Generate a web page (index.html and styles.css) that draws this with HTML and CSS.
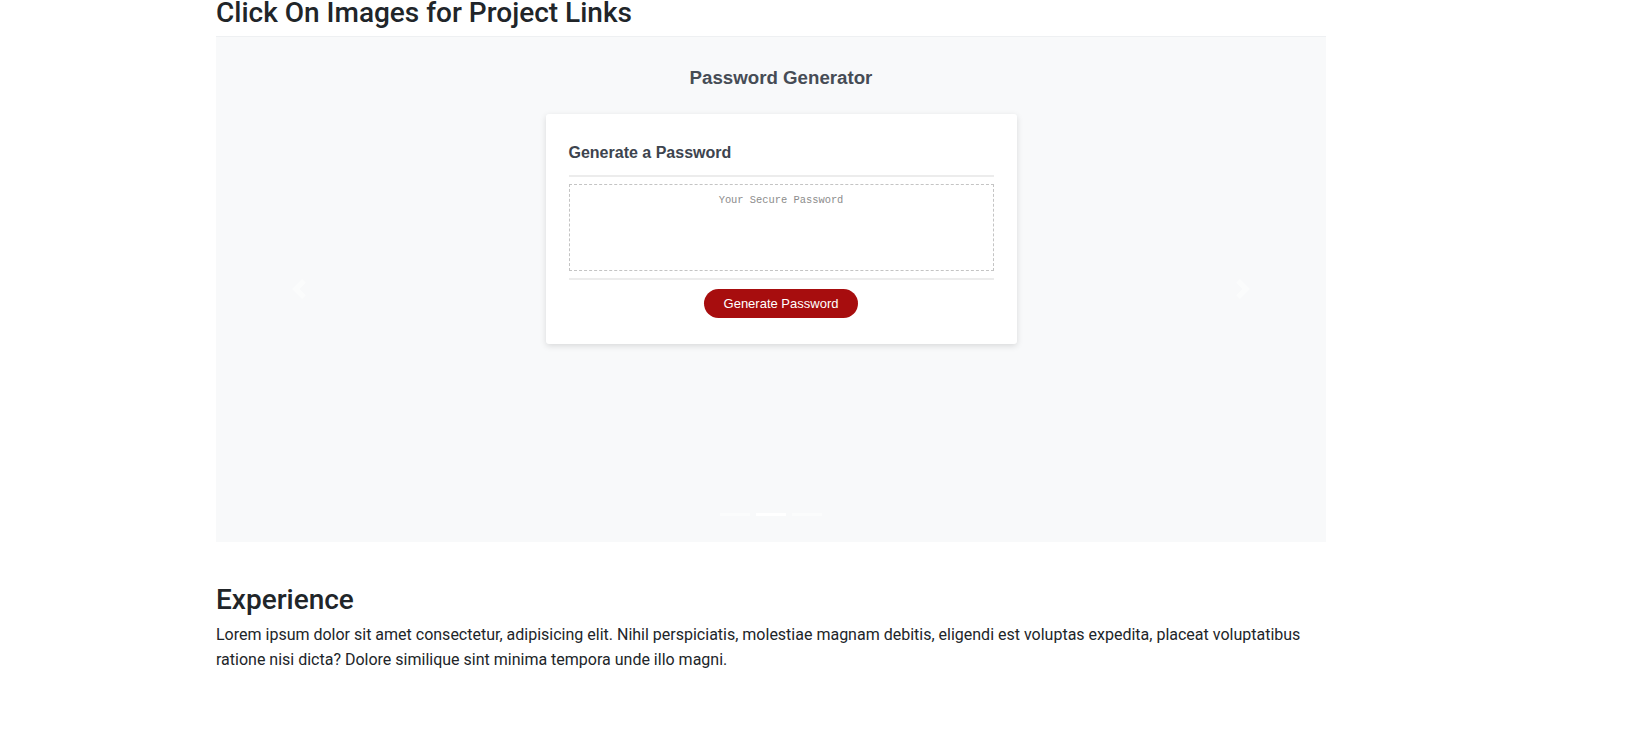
FILE: index.html
```html
<!DOCTYPE html>
<html lang="en">
<head>
<meta charset="utf-8">
<title>Projects</title>
<link rel="stylesheet" href="styles.css">
</head>
<body>
<main class="page">
  <h3 class="section-title top-title">Click On Images for Project Links</h3>
  <div class="carousel">
    <div class="slide">
      <div class="shot">
        <h1 class="shot-title">Password Generator</h1>
        <div class="pw-card">
          <div class="pw-header">
            <h2 class="pw-card-title">Generate a Password</h2>
          </div>
          <div class="pw-body">
            <div class="pw-box">Your Secure Password</div>
          </div>
          <div class="pw-footer">
            <button class="pw-btn" type="button">Generate Password</button>
          </div>
        </div>
      </div>
    </div>
    <a class="ctrl ctrl-prev" href="#" aria-label="Previous">
      <svg class="ctrl-icon" viewBox="0 0 8 8" width="20" height="20"><path d="M5.25 0l-4 4 4 4 1.5-1.5L4.25 4l2.5-2.5L5.25 0z"/></svg>
    </a>
    <a class="ctrl ctrl-next" href="#" aria-label="Next">
      <svg class="ctrl-icon" viewBox="0 0 8 8" width="20" height="20"><path d="M2.75 0l-1.5 1.5L3.75 4l-2.5 2.5L2.75 8l4-4-4-4z"/></svg>
    </a>
    <ol class="indicators">
      <li></li>
      <li class="active"></li>
      <li></li>
    </ol>
  </div>
  <h3 class="section-title exp-title">Experience</h3>
  <p class="lead-text">Lorem ipsum dolor sit amet consectetur, adipisicing elit. Nihil perspiciatis, molestiae magnam debitis, eligendi est voluptas expedita, placeat voluptatibus ratione nisi dicta? Dolore similique sint minima tempora unde illo magni.</p>
</main>
</body>
</html>
```

FILE: styles.css
```css
html, body {
  margin: 0;
  padding: 0;
  background: #ffffff;
}

body {
  font-family: Roboto, "Noto Sans", sans-serif;
  color: #212529;
  font-size: 16px;
  line-height: 25px;
}

.page {
  width: 1110px;
  margin-left: 216px;
}

.section-title {
  font-size: 28px;
  font-weight: 500;
  line-height: 1.2;
  margin: 0;
}

.top-title {
  line-height: 26px;
  margin: 0 0 10px;
}

.carousel {
  position: relative;
  height: 506px;
  overflow: hidden;
}

.slide {
  height: 100%;
}

.shot {
  box-sizing: border-box;
  height: 100%;
  background: #f8f9fa;
  border-top: 1px solid #eef0f2;
  padding: 30px 0 0 20px;
  display: flex;
  flex-direction: column;
  align-items: center;
  font-family: "Liberation Sans", Arial, sans-serif;
}

.shot-title {
  margin: 0;
  font-size: 18.7px;
  line-height: 21px;
  font-weight: 700;
  color: #464c55;
}

.pw-card {
  box-sizing: border-box;
  width: 471px;
  height: 230px;
  margin-top: 26px;
  padding: 0 23px;
  background: #ffffff;
  border-radius: 3px;
  box-shadow: 0 2px 6px rgba(0, 0, 0, 0.13);
}

.pw-header {
  padding: 30px 0 13px;
  border-bottom: 2px solid #ececec;
}

.pw-card-title {
  margin: 0;
  font-size: 16px;
  line-height: 18px;
  font-weight: 700;
  color: #3d444e;
}

.pw-body {
  padding: 7px 0 7px;
}

.pw-box {
  box-sizing: border-box;
  height: 87px;
  border: 1px dashed #c4c4c4;
  padding-top: 9px;
  text-align: center;
  font-family: "Liberation Mono", monospace;
  font-size: 10.4px;
  line-height: 12px;
  color: #8c8c8c;
}

.pw-footer {
  border-top: 2px solid #ececec;
  padding-top: 9px;
  display: flex;
  justify-content: center;
}

.pw-btn {
  width: 154px;
  height: 29px;
  border: none;
  border-radius: 15px;
  background: #a70d0e;
  color: #ffffff;
  font-family: "Liberation Sans", Arial, sans-serif;
  font-size: 13px;
  padding: 0;
}

.ctrl {
  position: absolute;
  top: 0;
  bottom: 0;
  width: 15%;
  display: flex;
  align-items: center;
  justify-content: center;
  opacity: 0.5;
}

.ctrl-prev {
  left: 0;
}

.ctrl-next {
  right: 0;
}

.ctrl-icon {
  fill: #ffffff;
  display: block;
}

.indicators {
  position: absolute;
  left: 0;
  right: 0;
  bottom: 0;
  margin: 0 0 16px;
  padding: 0;
  list-style: none;
  display: flex;
  justify-content: center;
}

.indicators li {
  width: 30px;
  height: 3px;
  margin: 0 3px;
  background: #ffffff;
  background-clip: padding-box;
  border-top: 10px solid transparent;
  border-bottom: 10px solid transparent;
  opacity: 0.5;
}

.indicators li.active {
  opacity: 1;
}

.exp-title {
  margin: 41px 0 5px;
}

.lead-text {
  margin: 0;
}
```
